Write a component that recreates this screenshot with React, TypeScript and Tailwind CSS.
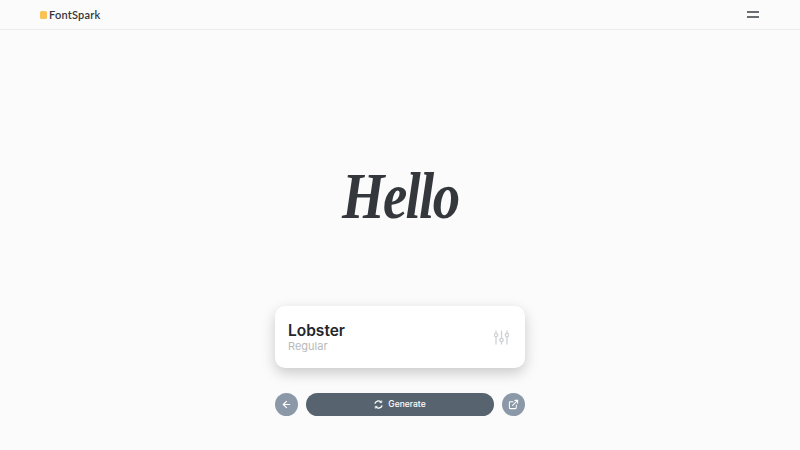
import { ArrowLeft, ExternalLink } from "lucide-react";

export default function App() {
  return (
    <div className="flex h-[450px] w-[800px] flex-col overflow-hidden bg-[#fbfbfb] font-['Inter',sans-serif]">
      <header className="flex h-[30px] shrink-0 items-center justify-between border-b border-[#eeeeee] pl-10 pr-[41px]">
        <div className="flex items-center gap-[2px]">
          <span className="h-[8px] w-[7px] rounded-[1.5px] bg-[#fbc355]" />
          <span className="font-['Lato',sans-serif] text-[11px] font-semibold leading-[14px] tracking-[0.2px] text-[#33363b]">FontSpark</span>
        </div>
        <div className="mb-[1px] flex flex-col gap-[3px]">
          <span className="h-[2px] w-3 bg-[#696c70]" />
          <span className="h-[2px] w-3 bg-[#696c70]" />
        </div>
      </header>
      <main className="flex flex-1 flex-col items-center">
        <h1 className="mt-[129px] h-[74px] scale-x-[0.83] font-['Liberation_Serif',serif] text-[66px] font-bold italic leading-[74px] tracking-[-2px] text-[#34383d]">Hello</h1>
        <section className="mt-[73px] flex h-[62px] w-[250px] items-center justify-between rounded-[10px] bg-white pl-[13px] pr-4 shadow-[0_5px_14px_rgba(0,0,0,0.2)]">
          <div className="flex flex-col">
            <span className="text-[15.5px] font-semibold leading-[17px] text-[#24272c]">Lobster</span>
            <span className="text-[11px] leading-[14px] text-[#b9b9b9]">Regular</span>
          </div>
          <svg className="h-[15px] w-[15px] text-[#cfd1d4]" viewBox="0 0 15 15" fill="none" stroke="currentColor" strokeWidth="1.3">
            <path d="M2 0.5V3M2 7V14.5M7.5 0.5V8M7.5 12V14.5M13 0.5V3M13 7V14.5" />
            <circle cx="2" cy="5" r="1.7" />
            <circle cx="7.5" cy="10" r="1.7" />
            <circle cx="13" cy="5" r="1.7" />
          </svg>
        </section>
        <div className="mt-[25px] flex w-[250px] items-center justify-between">
          <button className="flex h-[23px] w-[23px] items-center justify-center rounded-full bg-[#8a98a8] text-white">
            <ArrowLeft className="h-[11px] w-[11px]" strokeWidth={2.5} />
          </button>
          <button className="flex h-[23px] w-[188px] items-center justify-center gap-[5px] rounded-full bg-[#57646f] text-[8.5px] font-medium text-white">
            <svg className="h-[9px] w-[9px]" viewBox="0 0 10 10" fill="none" stroke="currentColor" strokeWidth="1.5">
              <path d="M1 4A4.1 4.1 0 0 1 7.6 1.9M9 6A4.1 4.1 0 0 1 2.4 8.1" />
              <path d="M8.6 0.5V2.9H6.2M1.4 9.5V7.1H3.8" strokeWidth="1" />
            </svg>
            <span>Generate</span>
          </button>
          <button className="flex h-[23px] w-[23px] items-center justify-center rounded-full bg-[#8a98a8] text-white">
            <ExternalLink className="h-[11px] w-[11px]" strokeWidth={2.2} />
          </button>
        </div>
      </main>
    </div>
  );
}
